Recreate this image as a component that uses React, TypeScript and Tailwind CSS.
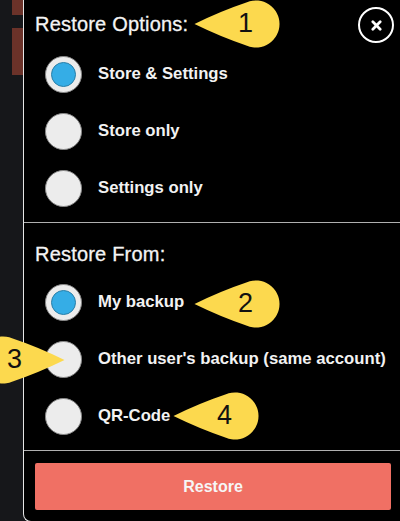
const fontStack = { fontFamily: '"Liberation Sans", Arial, sans-serif' };

const Radio = ({ label, on }: { label: string; on?: boolean }) => (
  <div className="flex h-[57px] items-center">
    <div className="flex h-[37px] w-[37px] shrink-0 items-center justify-center rounded-full border border-[#8a8a8a] bg-[#ececec]">
      {on && <div className="h-[25px] w-[25px] rounded-full border border-[#2a7fa8] bg-[#35ade6]" />}
    </div>
    <span className="mb-[2px] ml-[16px] whitespace-nowrap text-[16.7px] font-bold text-[#f2f2f2]">{label}</span>
  </div>
);

// yellow teardrop callout, tip points left unless flipped
const Callout = ({ n, className, flip }: { n: string; className: string; flip?: boolean }) => (
  <div className={`absolute h-[48px] w-[86px] ${className}`}>
    <svg viewBox="0 0 86 48" className={`absolute inset-0 h-full w-full ${flip ? "-scale-x-100" : ""}`}>
      <path d="M0.5 24 Q 27 11 53 2.3 A 23.5 23.5 0 1 1 53 45.7 Q 27 37 0.5 24 Z" fill="#fcd94e" />
    </svg>
    <span className={`absolute top-[6px] text-[27px] leading-[34px] text-[#111] ${flip ? "left-[28px]" : "left-[44px]"}`}>{n}</span>
  </div>
);

export default function App() {
  return (
    <div className="relative flex h-[521px] w-[400px] overflow-hidden bg-[#16171a]" style={fontStack}>
      {/* page behind the sheet */}
      <div className="flex w-[23px] shrink-0 flex-col items-end">
        <div className="h-[15px] w-[11px] bg-[#6b3229]" />
        <div className="mt-[13px] h-[47px] w-[11px] bg-[#6b3229]" />
      </div>

      {/* sheet, its bottom edge runs just past the window */}
      <div className="relative flex h-[522px] flex-1 flex-col rounded-bl-[8px] border-l-[1.5px] border-b-[1px] border-[#e6e6e6] bg-black">
        <div className="h-[223px] border-b border-[#b0b0b0] pl-[21px]">
          <h2 className="ml-[-10px] mt-[12px] text-[20px] leading-[24px] font-normal tracking-[0.2px] text-[#f4f4f4] [-webkit-text-stroke:0.3px_#f4f4f4]">Restore Options:</h2>
          <div className="mt-[10px]">
            <Radio label="Store & Settings" on />
            <Radio label="Store only" />
            <Radio label="Settings only" />
          </div>
        </div>

        <div className="h-[228px] border-b border-[#b0b0b0] pl-[21px]">
          <h2 className="ml-[-10px] mt-[19px] text-[20px] leading-[24px] font-normal tracking-[0.2px] text-[#f4f4f4] [-webkit-text-stroke:0.3px_#f4f4f4]">Restore From:</h2>
          <div className="mt-[8px]">
            <Radio label="My backup" on />
            <Radio label="Other user's backup (same account)" />
            <Radio label="QR-Code" />
          </div>
        </div>

        <div className="pl-[11px] pr-[9px] pt-[12px]">
          <button className="h-[47px] w-full rounded-[2px] bg-[#f07064] text-[16px] font-bold text-[#f6f6f6]">Restore</button>
        </div>

        {/* close button */}
        <button className="absolute right-[6px] top-[7px] flex h-[36px] w-[36px] items-center justify-center rounded-full border-[2px] border-white">
          <svg viewBox="0 0 12 12" className="h-[11px] w-[11px]">
            <path d="M2 2 L10 10 M10 2 L2 10" stroke="#fff" strokeWidth="3" strokeLinecap="round" />
          </svg>
        </button>
      </div>

      <Callout n="1" className="left-[194px] top-0" />
      <Callout n="2" className="left-[194px] top-[280px]" />
      <Callout n="3" className="left-[-21px] top-[336px]" flip />
      <Callout n="4" className="left-[173px] top-[392px]" />
    </div>
  );
}
